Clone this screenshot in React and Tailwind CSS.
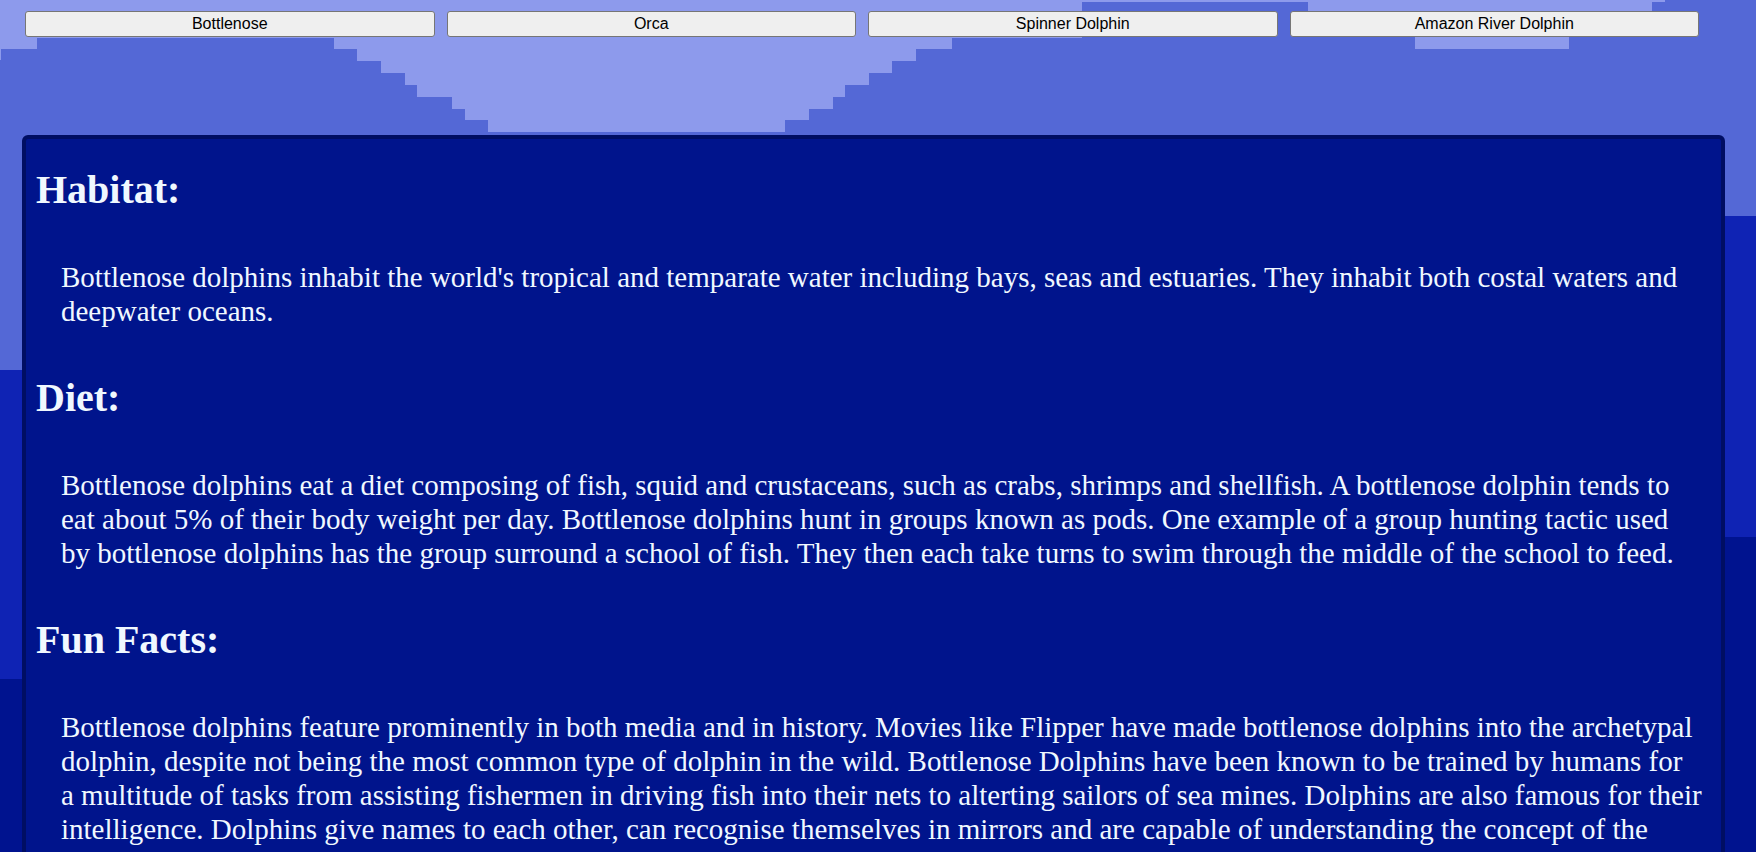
import React from "react";

const serif = { fontFamily: '"Liberation Serif", "Times New Roman", serif' };

function Background() {
  const medium =
    "0,60 1,60 1,49 37,49 37,38 334,38 334,49 357,49 357,61 381,61 381,73 405,73 405,85 417,85 417,97 452,97 452,109 465,109 465,120 488,120 488,132 785,132 785,120 809,120 809,109 833,109 833,97 845,97 845,85 869,85 869,73 892,73 892,61 916,61 916,49 952,49 952,38 1082,38 1082,2 1308,2 1308,26 1415,26 1415,49 1569,49 1569,26 1652,26 1652,2 1665,2 1665,0 1756,0 1756,852 0,852";
  const bright =
    "0,370 400,370 400,330 700,330 700,290 1000,290 1000,250 1300,250 1300,216 1756,216 1756,852 0,852";
  const dark =
    "0,679 400,679 400,640 800,640 800,600 1200,600 1200,560 1500,560 1500,537 1756,537 1756,852 0,852";
  return (
    <svg
      className="absolute left-0 top-0 w-full h-screen"
      viewBox="0 0 1756 852"
      preserveAspectRatio="none"
      shapeRendering="crispEdges"
    >
      <rect x="0" y="0" width="1756" height="852" fill="#8d9aec" />
      <polygon points={medium} fill="#5468d6" />
      <polygon points={bright} fill="#0f23b4" />
      <polygon points={dark} fill="#00138f" />
    </svg>
  );
}

const tabs = ["Bottlenose", "Orca", "Spinner Dolphin", "Amazon River Dolphin"];

function Section({ title, lines }) {
  return (
    <>
      <h2 className="text-[40px] leading-[46px] font-bold text-[#f0f8ff]" style={serif}>
        {title}
      </h2>
      <p
        className="pl-[25px] text-[29px] leading-[34px] text-[#f0f8ff] whitespace-nowrap"
        style={serif}
      >
        {lines.map((l, i) => (
          <React.Fragment key={i}>
            {l}
            {i < lines.length - 1 && <br />}
          </React.Fragment>
        ))}
      </p>
    </>
  );
}

export default function App() {
  return (
    <div className="relative min-h-screen overflow-hidden">
      <Background />
      <div className="relative">
        <div className="ml-[25px] w-[1674px] pt-[11px] flex gap-3">
          {tabs.map((t) => (
            <button
              key={t}
              className="flex-1 h-[26px] bg-[#efefef] border border-[#767676] rounded-[3px] text-[16px] leading-[18px] text-black"
              style={{ fontFamily: '"Liberation Sans", Arial, sans-serif' }}
            >
              {t}
            </button>
          ))}
        </div>
        <div className="ml-[22px] mt-[98px] w-[1703px] bg-[#00148c] border-4 border-[#000e63] rounded-[6px] pt-[28px] pl-[10px] pb-[40px] flex flex-col gap-[47px]">
          <Section
            title="Habitat:"
            lines={[
              "Bottlenose dolphins inhabit the world's tropical and temparate water including bays, seas and estuaries. They inhabit both costal waters and",
              "deepwater oceans.",
            ]}
          />
          <Section
            title="Diet:"
            lines={[
              "Bottlenose dolphins eat a diet composing of fish, squid and crustaceans, such as crabs, shrimps and shellfish. A bottlenose dolphin tends to",
              "eat about 5% of their body weight per day. Bottlenose dolphins hunt in groups known as pods. One example of a group hunting tactic used",
              "by bottlenose dolphins has the group surround a school of fish. They then each take turns to swim through the middle of the school to feed.",
            ]}
          />
          <Section
            title="Fun Facts:"
            lines={[
              "Bottlenose dolphins feature prominently in both media and in history. Movies like Flipper have made bottlenose dolphins into the archetypal",
              "dolphin, despite not being the most common type of dolphin in the wild. Bottlenose Dolphins have been known to be trained by humans for",
              "a multitude of tasks from assisting fishermen in driving fish into their nets to alterting sailors of sea mines. Dolphins are also famous for their",
              "intelligence. Dolphins give names to each other, can recognise themselves in mirrors and are capable of understanding the concept of the",
            ]}
          />
        </div>
      </div>
    </div>
  );
}
